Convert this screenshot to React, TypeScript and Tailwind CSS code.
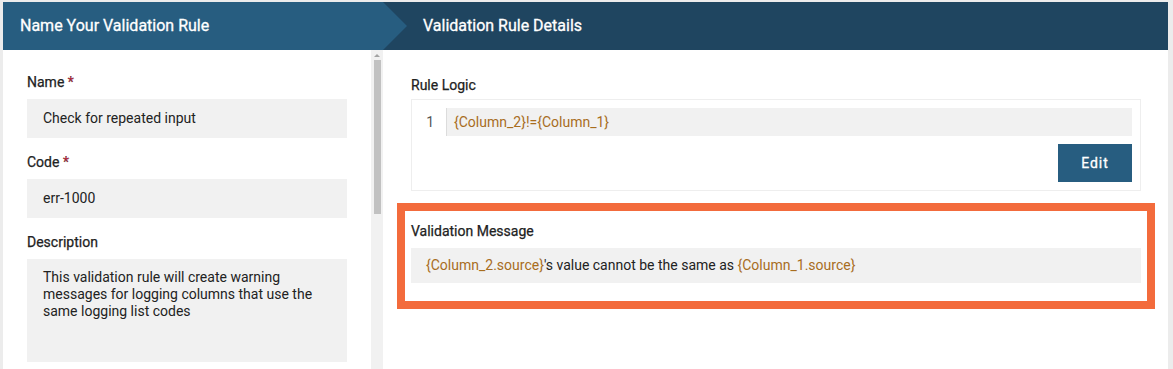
export default function App() {
  const token = 'text-[#a86d1e]';
  return (
    <div className="w-[1173px] h-[369px] overflow-hidden bg-[#ececec] pt-[2px] pl-[3px] pr-[5px] font-['Roboto',_'Liberation_Sans',_sans-serif]">
      {/* step header */}
      <div className="relative flex h-[48px] text-white text-[16px]">
        <div className="w-[380px] bg-[#275d80] flex items-center pl-[17px] [-webkit-text-stroke:0.3px_white]">Name Your Validation Rule</div>
        <div className="flex-1 bg-[#1f4560] flex items-center pl-[40px] [-webkit-text-stroke:0.3px_white]">Validation Rule Details</div>
        <div className="absolute left-[380px] top-0 h-[48px] w-[24px] bg-[#275d80] [clip-path:polygon(0_0,100%_50%,0_100%)]" />
      </div>

      <div className="flex h-[319px]">
        {/* left form */}
        <div className="w-[368px] bg-white pl-[24px] pt-[22px] text-[14px]">
          <label className="block text-[#222] leading-[20px] [-webkit-text-stroke:0.25px_#222]">
            Name <span className="text-[#d0213a]">*</span>
          </label>
          <div className="mt-[7px] w-[320px] h-[39px] bg-[#f1f1f1] pl-[16px] flex items-center text-[#222]">
            Check for repeated input
          </div>
          <label className="block mt-[14px] text-[#222] leading-[20px] [-webkit-text-stroke:0.25px_#222]">
            Code <span className="text-[#d0213a]">*</span>
          </label>
          <div className="mt-[7px] w-[320px] h-[39px] bg-[#f1f1f1] pl-[16px] flex items-center text-[#222]">
            err-1000
          </div>
          <label className="block mt-[14px] text-[#222] leading-[20px] [-webkit-text-stroke:0.25px_#222]">Description</label>
          <div className="mt-[7px] w-[320px] h-[103px] bg-[#f1f1f1] pl-[16px] pr-[20px] pt-[10px] leading-[17px] text-[#222]">
            This validation rule will create warning messages for logging columns that use the same logging list codes
          </div>
        </div>

        {/* scrollbar */}
        <div className="w-[12px] bg-[#f1f1f1] flex flex-col items-center">
          <div className="h-[10px] flex items-center justify-center">
            <div className="w-0 h-0 border-l-[3px] border-r-[3px] border-b-[3px] border-l-transparent border-r-transparent border-b-[#a3a3a3]" />
          </div>
          <div className="w-[7px] h-[154px] bg-[#c1c1c1]" />
        </div>

        {/* right details */}
        <div className="flex-1 bg-white pl-[28px] pt-[25px] text-[14px]">
          <div className="text-[#222] leading-[20px] [-webkit-text-stroke:0.25px_#222]">Rule Logic</div>
          <div className="mt-[4px] w-[730px] border border-[#eeeeee] pt-[8px] pr-[8px] pb-[8px]">
            <div className="flex h-[28px]">
              <div className="w-[34px] text-[#555] flex items-center justify-end pr-[12px]">1</div>
              <div className={`flex-1 bg-[#f1f1f1] border-l border-[#dcdcdc] pl-[7px] flex items-center ${token}`}>
                {'{Column_2}!={Column_1}'}
              </div>
            </div>
            <div className="flex justify-end mt-[8px]">
              <button className="w-[74px] h-[38px] bg-[#275d80] text-white text-[14px] tracking-[1px] [-webkit-text-stroke:0.3px_white]">
                Edit
              </button>
            </div>
          </div>

          <div className="mt-[12px] -ml-[14px] w-[758px] border-[8px] border-[#f36b3c] pt-[10px] pl-[6px] pr-[6px] pb-[18px]">
            <div className="text-[#222] leading-[20px] [-webkit-text-stroke:0.25px_#222]">Validation Message</div>
            <div className="mt-[7px] h-[35px] bg-[#f1f1f1] pl-[15px] flex items-center text-[#222]">
              <span className={token}>{'{Column_2.source}'}</span>
              <span>'s value cannot be the same as&nbsp;</span>
              <span className={token}>{'{Column_1.source}'}</span>
            </div>
          </div>
        </div>
      </div>
    </div>
  );
}
